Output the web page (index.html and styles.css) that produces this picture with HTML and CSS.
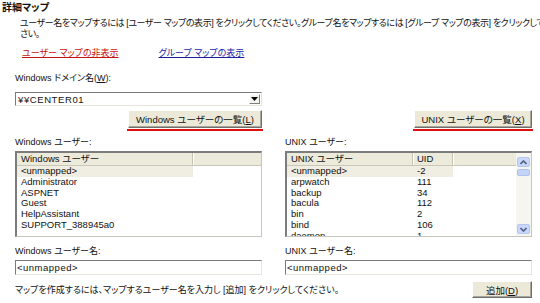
FILE: index.html
```html
<!DOCTYPE html>
<html lang="ja">
<head>
<meta charset="utf-8">
<title>詳細マップ</title>
<link rel="stylesheet" href="styles.css">
</head>
<body>
<div class="page">
  <div class="title">詳細マップ</div>
  <p class="desc">ユーザー名をマップするには [ユーザー マップの表示] をクリックしてください。グループ名をマップするには [グループ マップの表示] をクリックしてくだ<br>さい。</p>
  <div class="links">
    <a class="link hide">ユーザー マップの非表示</a>
    <a class="link show">グループ マップの表示</a>
  </div>
  <div class="domain-label">Windows ドメイン名(<u>W</u>):</div>

  <div class="grid">
    <div class="combo">
      <span class="combo-text">¥¥CENTER01</span>
      <span class="combo-btn"><svg width="7" height="4" viewBox="0 0 7 4"><path d="M0 0h7L3.5 4z" fill="#000"/></svg></span>
    </div>
    <div></div>

    <div class="btn-wrap"><button class="btn btn-win">Windows ユーザーの一覧(<u>L</u>)</button></div>
    <div class="btn-wrap"><button class="btn btn-unix">UNIX ユーザーの一覧(<u>X</u>)</button></div>

    <div class="label">Windows ユーザー:</div>
    <div class="label">UNIX ユーザー:</div>

    <div class="listbox">
      <div class="lb-head">
        <div class="th win-c1">Windows ユーザー</div>
        <div class="th th-rest"></div>
      </div>
      <div class="lb-body">
        <div class="row sel"><span class="cell win-c1">&lt;unmapped&gt;</span></div>
        <div class="row"><span class="cell win-c1">Administrator</span></div>
        <div class="row"><span class="cell win-c1">ASPNET</span></div>
        <div class="row"><span class="cell win-c1">Guest</span></div>
        <div class="row"><span class="cell win-c1">HelpAssistant</span></div>
        <div class="row"><span class="cell win-c1">SUPPORT_388945a0</span></div>
      </div>
    </div>

    <div class="listbox unix">
      <div class="lb-main">
        <div class="lb-head">
          <div class="th unix-c1">UNIX ユーザー</div>
          <div class="th unix-c2">UID</div>
          <div class="th th-rest"></div>
        </div>
        <div class="lb-body">
          <div class="row sel"><span class="cell unix-c1">&lt;unmapped&gt;</span><span class="cell unix-c2">-2</span></div>
          <div class="row"><span class="cell unix-c1">arpwatch</span><span class="cell unix-c2">111</span></div>
          <div class="row"><span class="cell unix-c1">backup</span><span class="cell unix-c2">34</span></div>
          <div class="row"><span class="cell unix-c1">bacula</span><span class="cell unix-c2">112</span></div>
          <div class="row"><span class="cell unix-c1">bin</span><span class="cell unix-c2">2</span></div>
          <div class="row"><span class="cell unix-c1">bind</span><span class="cell unix-c2">106</span></div>
          <div class="row"><span class="cell unix-c1">daemon</span><span class="cell unix-c2">1</span></div>
        </div>
      </div>
      <div class="scrollbar">
        <div class="sb-btn"><svg width="7" height="5" viewBox="0 0 7 5"><path d="M0.5 4L3.5 1L6.5 4" fill="none" stroke="#4d6185" stroke-width="1.6"/></svg></div>
        <div class="sb-thumb"></div>
        <div class="sb-track"></div>
        <div class="sb-btn"><svg width="7" height="5" viewBox="0 0 7 5"><path d="M0.5 1L3.5 4L6.5 1" fill="none" stroke="#4d6185" stroke-width="1.6"/></svg></div>
      </div>
    </div>

    <div class="label label-lower">Windows ユーザー名:</div>
    <div class="label label-lower">UNIX ユーザー名:</div>

    <div class="textbox">&lt;unmapped&gt;</div>
    <div class="textbox">&lt;unmapped&gt;</div>
  </div>

  <div class="footer">
    <span class="footer-text">マップを作成するには、マップするユーザー名を入力し [追加] をクリックしてください。</span>
    <button class="btn btn-add">追加(<u>D</u>)</button>
  </div>
</div>
</body>
</html>
```

FILE: styles.css
```css
* { box-sizing: border-box; }
html, body { margin: 0; padding: 0; background: #fff; }
body {
  width: 540px;
  height: 303px;
  overflow: hidden;
  font-family: "Liberation Sans", "Noto Sans CJK JP", sans-serif;
  font-size: 9px;
  color: #111;
  font-feature-settings: "palt";
}
.page { padding: 2px 8px 0 15px; }
.title {
  margin-left: -13px;
  font-weight: bold;
  font-size: 10px;
  line-height: 12px;
}
.desc {
  margin: 4px 0 0 5px;
  line-height: 11px;
  white-space: nowrap;
  letter-spacing: -0.42px;
}
.links {
  display: flex;
  gap: 40px;
  margin: 7px 0 0 7px;
  line-height: 12px;
}
.link { text-decoration: underline; }
.hide { color: #c81010; }
.show { color: #1c1ca8; }
.domain-label { margin-top: 13px; line-height: 12px; }

.grid {
  display: grid;
  grid-template-columns: 247px 247px;
  column-gap: 23px;
}
.combo {
  margin-top: 8px;
  height: 14px;
  display: flex;
  align-items: center;
  justify-content: space-between;
  border-top: 1px solid #7a7a7a;
  border-left: 1px solid #7a7a7a;
  border-bottom: 1px solid #e8e6dc;
  border-right: 1px solid #e8e6dc;
  padding: 0 1px 0 2px;
}
.combo-text { font-size: 9.5px; letter-spacing: 0.6px; }
.combo-btn {
  width: 11px;
  height: 10px;
  display: flex;
  align-items: center;
  justify-content: center;
  background: #f4f3ee;
  border: 1px solid;
  border-color: #fff #808080 #808080 #fff;
}

.btn-wrap {
  justify-self: end;
  margin-top: 4px;
  margin-right: -1px;
  padding: 0 1px 1px;
  border-bottom: 2px solid #e01010;
}
.btn {
  display: block;
  font-family: inherit;
  font-size: 9.5px;
  font-feature-settings: "palt";
  color: #111;
  background: #ece9d8;
  border: 1px solid;
  border-color: #fff #6e6e6e #6e6e6e #fff;
  box-shadow: inset -1px -1px 0 #a8a699;
  padding: 0;
  height: 18px;
}
.btn-win { width: 134px; }
.btn-unix { width: 118px; }

.label { margin-top: 5px; line-height: 12px; }
.label-lower { margin-top: 8px; }

.listbox {
  margin-top: 3px;
  height: 86px;
  border-top: 2px solid #7c7c7c;
  border-left: 2px solid #7c7c7c;
  border-bottom: 1px solid #c8c6bc;
  border-right: 1px solid #c8c6bc;
  overflow: hidden;
  font-size: 9.5px;
}
.listbox.unix { display: flex; }
.lb-main { flex: 1; overflow: hidden; }
.lb-head {
  display: flex;
  height: 13px;
  background: #ebeadb;
  border-bottom: 1px solid #cbc7b8;
}
.th {
  line-height: 12px;
  padding-left: 4px;
  border-right: 1px solid #c5c2b2;
  box-shadow: 1px 0 0 #fff;
  white-space: nowrap;
}
.th-rest { flex: 1; border-right: none; box-shadow: none; }
.win-c1 { width: 176px; }
.unix-c1 { width: 126px; }
.unix-c2 { width: 40px; }
.row {
  display: flex;
  height: 10.8px;
  line-height: 10.8px;
  white-space: nowrap;
}
.cell { padding-left: 4px; }
.row.sel .cell { background: #f0eee2; }

.scrollbar {
  width: 15px;
  display: flex;
  flex-direction: column;
  background: #f6f5f0;
  padding: 4px 1px 2px;
}
.sb-btn {
  height: 10px;
  display: flex;
  align-items: center;
  justify-content: center;
  background: #c8d7fa;
  border: 1px solid #b4c7ef;
  border-radius: 2px;
}
.sb-thumb {
  margin-top: 2px;
  height: 7px;
  background: #c4d4f8;
  border: 1px solid #b0c2ec;
  border-radius: 2px;
}
.sb-track { flex: 1; }

.textbox {
  margin-top: 3px;
  height: 15px;
  line-height: 13px;
  padding-left: 1px;
  font-size: 9.5px;
  letter-spacing: 0.5px;
  border-top: 1px solid #7a7a7a;
  border-left: 1px solid #7a7a7a;
  border-bottom: 1px solid #e8e6dc;
  border-right: 1px solid #e8e6dc;
}

.footer {
  display: flex;
  justify-content: space-between;
  align-items: center;
  margin-top: 6px;
}
.btn-add { width: 60px; height: 17px; }
```
